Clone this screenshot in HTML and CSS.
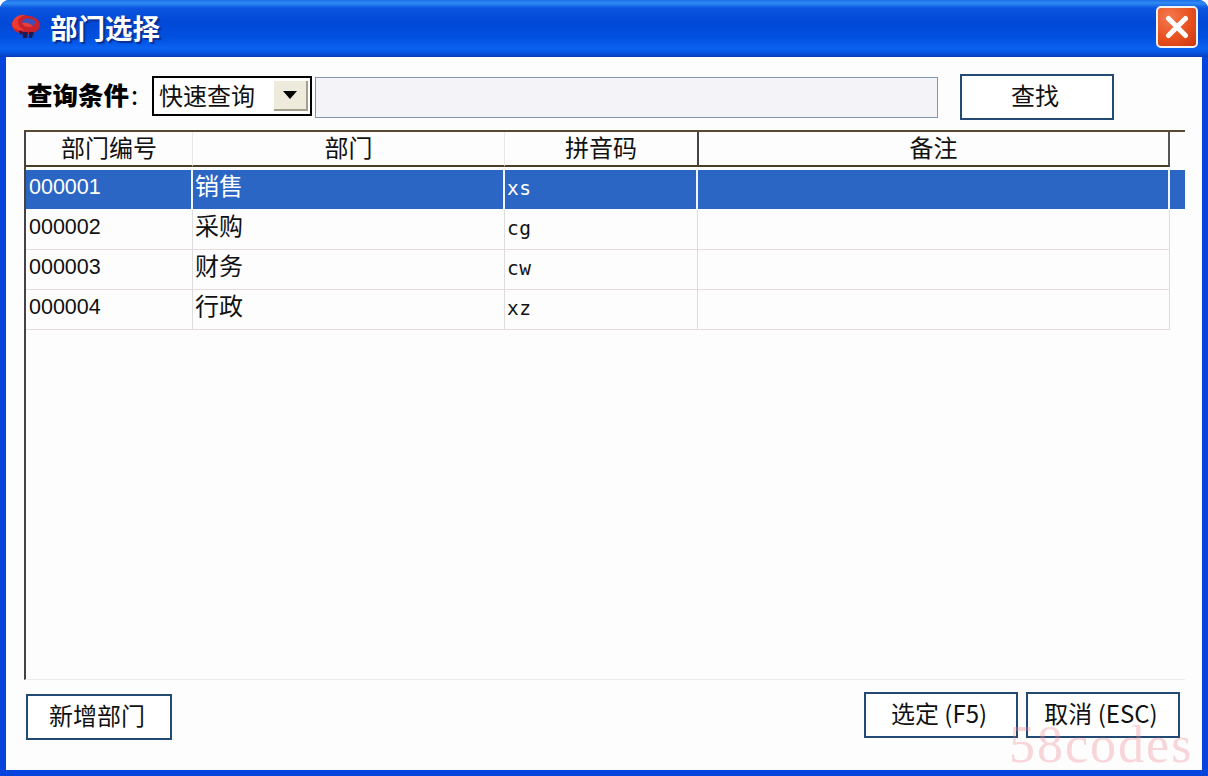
FILE: index.html
```html
<!DOCTYPE html>
<html lang="zh-CN">
<head>
<meta charset="utf-8">
<title>部门选择</title>
<link rel="stylesheet" href="styles.css">
</head>
<body>
<div class="window">
  <header class="titlebar">
    <svg class="logo" width="30" height="26" viewBox="0 0 30 26">
      <ellipse cx="15" cy="11" rx="14" ry="9.5" fill="#c8222e"/>
      <path d="M1 10C2 3 9 0 15 1c-4 1-8 3-8 7 0 3 2 6 6 8-6 1-12-1-12-6z" fill="#ee3a30"/>
      <path d="M12 6c3-2 8-2 11 0 2 2 1 5-2 6-3 0-7 0-9-2-1-1-1-3 0-4z" fill="#3d4fb8"/>
      <path d="M11 9c4-1 8 0 11 3-4 2-9 1-11-3z" fill="#e8403a"/>
      <path d="M11 18h6l-1 6h-4zM18 18h5l-2 6h-3zM8 17h3v3H9z" fill="#1c1c52"/>
    </svg>
    <h1 class="title">部门选择</h1>
    <button class="close" type="button" aria-label="关闭">
      <svg width="24" height="24" viewBox="0 0 24 24"><path d="M3.5 3.5l17 17M20.5 3.5l-17 17" stroke="#fff" stroke-width="5" stroke-linecap="round"/></svg>
    </button>
  </header>
  <main class="content">
    <div class="toolbar">
      <span class="label">查询条件<span class="colon">:</span></span>
      <div class="combo">
        <span class="combo-text">快速查询</span>
        <span class="combo-arrow"></span>
      </div>
      <div class="search"></div>
      <button class="btn btn-find" type="button">查找</button>
    </div>
    <section class="grid">
      <div class="row head">
        <div class="cell">部门编号</div>
        <div class="cell">部门</div>
        <div class="cell">拼音码</div>
        <div class="cell cell-note">备注</div>
      </div>
      <div class="rows">
        <div class="row data selected">
          <div class="cell num">000001</div><div class="cell name">销售</div><div class="cell code">xs</div><div class="cell"></div><div class="tail"></div>
        </div>
        <div class="row data">
          <div class="cell num">000002</div><div class="cell name">采购</div><div class="cell code">cg</div><div class="cell"></div>
        </div>
        <div class="row data">
          <div class="cell num">000003</div><div class="cell name">财务</div><div class="cell code">cw</div><div class="cell"></div>
        </div>
        <div class="row data">
          <div class="cell num">000004</div><div class="cell name">行政</div><div class="cell code">xz</div><div class="cell"></div>
        </div>
      </div>
    </section>
    <footer class="footer">
      <button class="btn btn-new" type="button">新增部门</button>
      <div class="footer-right">
        <button class="btn" type="button">选定 (F5)</button>
        <button class="btn" type="button">取消 (ESC)</button>
      </div>
    </footer>
  </main>
  <div class="watermark">58codes</div>
</div>
</body>
</html>
```
FILE: styles.css
```css
* { box-sizing: border-box; }
html, body { margin: 0; padding: 0; background: #fff; }
body {
  width: 1208px;
  height: 776px;
  overflow: hidden;
  font-family: "Liberation Sans", "Noto Sans CJK SC", sans-serif;
  color: #111;
}
.window {
  position: relative;
  width: 1208px;
  height: 776px;
  display: flex;
  flex-direction: column;
  background: #0645dd;
  border-radius: 9px 9px 0 0;
  overflow: hidden;
}
.titlebar {
  height: 57px;
  flex: none;
  display: flex;
  align-items: center;
  padding: 0 10px;
  background: linear-gradient(180deg, #1c6ee8 0, #2f8bf5 3px, #0b56e0 8px, #0148d6 22px, #0250e0 38px, #0a62f0 48px, #0553e0 53px, #0a3cb8 57px);
}
.logo { flex: none; margin: -3px 0 0 1px; }
.title {
  margin: 0 0 0 9px;
  font-size: 27.5px;
  font-weight: 700;
  line-height: 1;
  color: #fff;
  font-family: "Noto Sans CJK SC", sans-serif;
  text-shadow: 2px 2px 1px #0a2f90;
  flex: 1;
  padding-bottom: 2px;
}
.close {
  width: 42px;
  height: 42px;
  margin: -3px 0 0 0;
  padding: 0;
  display: flex;
  align-items: center;
  justify-content: center;
  border: 2px solid #f2f2f2;
  border-radius: 5px;
  background: radial-gradient(circle at 30% 25%, #f47a50 0, #e8501f 55%, #c93510 100%);
}
.content {
  flex: 1;
  margin: 0 6px 6px;
  padding: 17px 0 0 0;
  background: #fdfdfd;
  display: flex;
  flex-direction: column;
}
.toolbar {
  height: 46px;
  flex: none;
  display: flex;
  align-items: center;
  padding-left: 21px;
}
.label {
  width: 125px;
  flex: none;
  font: 900 25.5px/1 "Noto Sans CJK SC", sans-serif;
  color: #000;
  padding-bottom: 7px;
}
.colon { font-weight: 400; margin-left: 2px; }
.combo {
  width: 160px;
  height: 40px;
  flex: none;
  display: flex;
  align-items: center;
  justify-content: space-between;
  margin-top: -2px;
  padding: 0 2px 0 5px;
  border: 2px solid #000;
  background: #fff;
}
.combo-text { font: 24px/1 "Noto Sans CJK SC", sans-serif; padding-bottom: 2px; }
.combo-arrow {
  width: 34px;
  height: 30px;
  display: flex;
  align-items: center;
  justify-content: center;
  background: #efebdc;
  border-right: 2px solid #a39f8c;
  border-bottom: 2px solid #a39f8c;
}
.combo-arrow::before {
  content: "";
  border-left: 7px solid transparent;
  border-right: 7px solid transparent;
  border-top: 8px solid #000;
}
.search {
  width: 623px;
  height: 41px;
  flex: none;
  margin-left: 3px;
  border: 1px solid #7d97b0;
  background: #f4f3f8;
}
.btn {
  width: 154px;
  height: 46px;
  padding: 0 4px 5px 0;
  border: 2px solid #234a72;
  background: #fff;
  color: #111;
  font: 24px/1 "Noto Sans CJK SC", "Liberation Sans", sans-serif;
  cursor: default;
}
.btn-find { margin-left: 22px; }
.grid {
  flex: 1;
  width: 1161px;
  margin: 10px 0 0 18px;
  border-top: 2px solid #5a4a35;
  border-left: 2px solid #444;
  border-bottom: 1px solid #ececec;
  min-height: 0;
}
.row {
  display: grid;
  grid-template-columns: 167px 312px 193px 472px;
}
.head { height: 35px; width: 1144px; }
.head .cell {
  display: flex;
  align-items: center;
  justify-content: center;
  padding-bottom: 3px;
  font: 24px/1 "Noto Sans CJK SC", sans-serif;
  color: #111;
  border-bottom: 2px solid #4d3d25;
  border-right: 1px solid #e8e8e8;
}
.head .cell-note {
  border-left: 2px solid #444;
  border-right: 2px solid #555;
  margin-left: -1px;
}
.rows { padding-top: 3px; }
.data { position: relative; height: 40px; }
.data .cell {
  display: flex;
  align-items: center;
  padding-left: 3px;
  border-bottom: 1px solid #e6dada;
  border-right: 1px solid #ddd;
  white-space: nowrap;
}
.data .num { font-size: 21.5px; padding-bottom: 4px; }
.data .name { font: 24px/1 "Noto Sans CJK SC", sans-serif; padding: 0 0 9px 2px; }
.data .code { font: 19.5px/1 "DejaVu Sans Mono", monospace; padding: 0 0 2px 2px; letter-spacing: 0.5px; }
.selected { grid-template-columns: 167px 312px 193px 472px 15px; }
.selected .cell {
  background: #2c66c4;
  color: #fff;
  border-right: 2px solid #f0f4fb;
  border-bottom: 1px solid #fdfdfd;
}
.tail { background: #2c66c4; border-bottom: 1px solid #fdfdfd; }
.footer {
  height: 90px;
  flex: none;
  display: flex;
  justify-content: space-between;
  align-items: flex-start;
  padding: 12px 22px 0 20px;
}
.btn-new { width: 146px; margin-top: 2px; }
.footer-right { display: flex; gap: 8px; }
.watermark {
  position: absolute;
  left: 1009px;
  top: 716px;
  font: 52px/1.1 "Liberation Serif", serif;
  letter-spacing: 2px;
  color: rgba(240, 130, 140, 0.32);
  pointer-events: none;
}
```
